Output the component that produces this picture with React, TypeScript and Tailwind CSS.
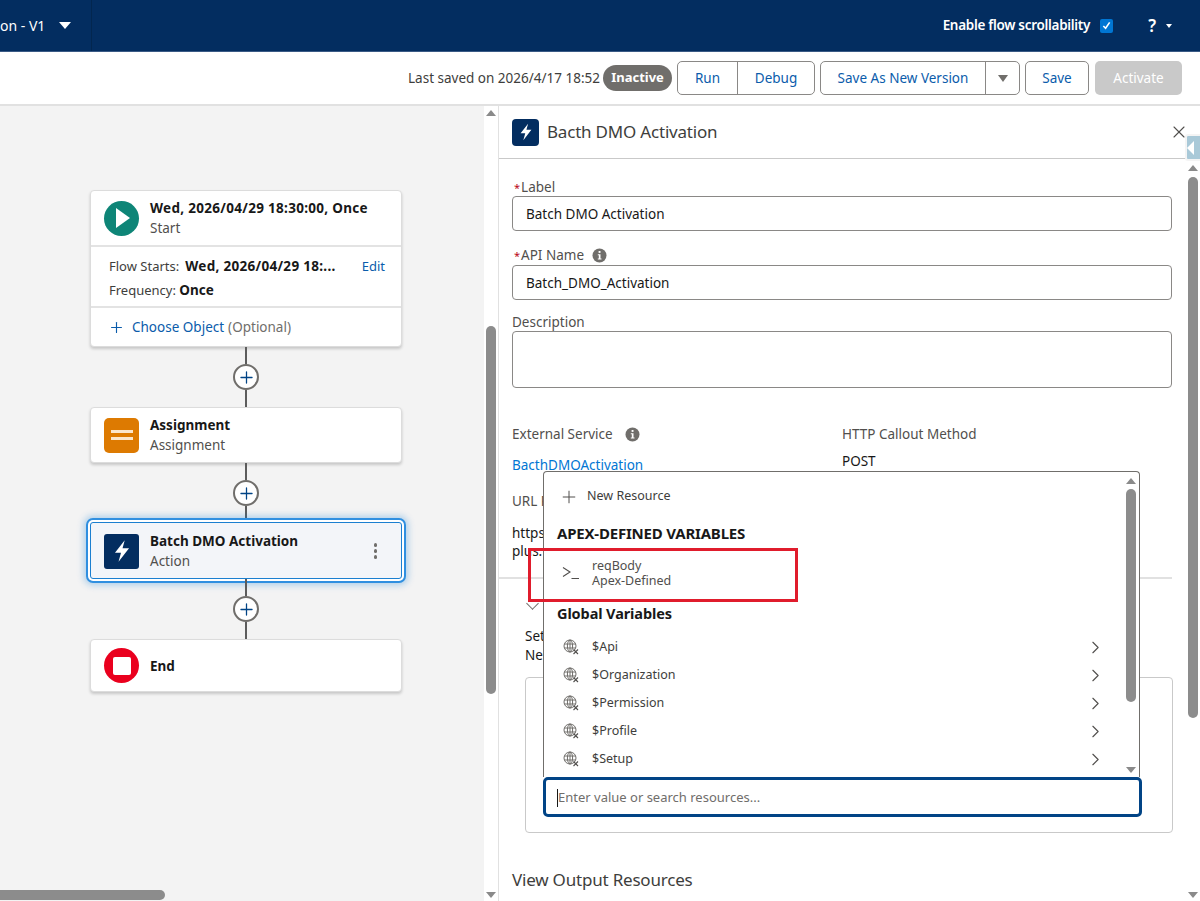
import { ChevronRight, Plus, X } from 'lucide-react';

const FONT = 'font-["Noto_Sans",sans-serif]';

function Bolt({ size }: { size: number }) {
    return (
        <svg width={size} height={size} viewBox="0 0 24 24" fill="white">
            <path d="M14.5 2 5.5 13.5h5.6L8.8 22l9.7-12.6h-6z" />
        </svg>
    );
}

function InfoDot({ className }: { className?: string }) {
    return (
        <svg width="15" height="15" viewBox="0 0 15 15" className={className}>
            <circle cx="7.5" cy="7.5" r="7" fill="#706e6b" />
            <rect x="6.6" y="3" width="1.9" height="1.9" fill="white" />
            <path d="M5.8 6.2h2.7v4.4h1v1H5.8v-1h1V7.2h-1z" fill="white" />
        </svg>
    );
}

function GlobeFx() {
    return (
        <svg width="16" height="16" viewBox="0 0 16 16" fill="none" stroke="#706e6b" strokeWidth="1">
            <circle cx="7" cy="7" r="6" />
            <ellipse cx="7" cy="7" rx="2.6" ry="6" />
            <path d="M1.2 5h11.6M1.2 9h11.6M7 1v12" />
            <path d="M10.5 10.5l4.5 4.5M15 10.5 10.5 15" stroke="#514f4d" strokeWidth="1.1" fill="white" />
        </svg>
    );
}

function PlusNode({ lower = 'h-[17px]' }: { lower?: string }) {
    return (
        <div className="flex flex-col items-center">
            <div className="w-[2px] h-[17px] bg-[#5c5c5c]" />
            <div className="w-[26px] h-[26px] rounded-full bg-white border-2 border-[#706e6b] flex items-center justify-center">
                <Plus size={19} strokeWidth={1.6} className="text-[#014486]" />
            </div>
            <div className={`w-[2px] ${lower} bg-[#5c5c5c]`} />
        </div>
    );
}

function NodeTitle({ title, sub, wide }: { title: string; sub?: string; wide?: boolean }) {
    return (
        <div className="ml-[11px] min-w-0">
            <div className={`text-[13.5px] leading-[20px] font-bold text-[#181818] whitespace-nowrap ${wide ? 'tracking-[0.3px]' : ''}`}>{title}</div>
            {sub && <div className="text-[13.5px] leading-[20px] text-[#514f4d]">{sub}</div>}
        </div>
    );
}

function ScrollArrow({ down }: { down?: boolean }) {
    return (
        <div
            className={`w-0 h-0 border-l-[5px] border-r-[5px] border-l-transparent border-r-transparent ${
                down ? 'border-t-[6px] border-t-[#8a8a8a]' : 'border-b-[6px] border-b-[#8a8a8a]'
            }`}
        />
    );
}

function ResourceRow({ name }: { name: string }) {
    return (
        <div className="h-[28px] flex items-center pl-[19px] pr-[18px]">
            <GlobeFx />
            <span className="ml-[13px] text-[12.5px] text-[#3e3e3c]">{name}</span>
            <ChevronRight size={21} strokeWidth={1.3} className="ml-auto text-[#514f4d]" />
        </div>
    );
}

function ToolButton({ label, className }: { label: string; className?: string }) {
    return (
        <div className={`h-full pt-[1px] flex items-center justify-center text-[13.5px] text-[#0b5cab] ${className ?? ''}`}>
            {label}
        </div>
    );
}

export default function App() {
    const resources = ['$Api', '$Organization', '$Permission', '$Profile', '$Setup'];

    return (
        <div className={`w-[1200px] h-[901px] overflow-hidden flex flex-col bg-white ${FONT}`}>
            {/* Top bar */}
            <div className="h-[52px] shrink-0 bg-[#032d60] border-b border-[#3a5a85] flex items-center text-white">
                <div className="w-[92px] h-full shrink-0 border-r border-[#02264f] flex items-center">
                    <span className="text-[14px]">on - V1</span>
                    <div className="ml-[14px] w-0 h-0 border-l-[6px] border-r-[6px] border-t-[7px] border-l-transparent border-r-transparent border-t-white" />
                </div>
                <div className="ml-auto flex items-center">
                    <span className="text-[13.5px] font-semibold tracking-[-0.3px]">Enable flow scrollability</span>
                    <div className="ml-[10px] w-[13px] h-[14px] rounded-[2px] bg-[#0176d3] flex items-center justify-center">
                        <svg width="9" height="9" viewBox="0 0 10 10" fill="none" stroke="white" strokeWidth="1.8">
                            <path d="M1.5 5.5 4 8l4.5-6.5" />
                        </svg>
                    </div>
                    <span className="ml-[35px] text-[17px] font-semibold">?</span>
                    <div className="ml-[10px] mr-[28px] w-0 h-0 border-l-[3px] border-r-[3px] border-t-[4px] border-l-transparent border-r-transparent border-t-white" />
                </div>
            </div>

            {/* Toolbar */}
            <div className="h-[54px] shrink-0 border-b-2 border-[#e1e1e1] flex items-center justify-end pr-[18px]">
                <span className="pt-[1px] text-[13.5px] text-[#3e3e3c] whitespace-nowrap">Last saved on 2026/4/17 18:52</span>
                <div className="ml-[3px] w-[69px] h-[26px] rounded-full bg-[#706e6b] text-white text-[13px] font-bold flex items-center justify-center">
                    Inactive
                </div>
                <div className="ml-[5px] w-[138px] h-[34px] flex rounded-[5px] border border-[#8a8886] bg-white">
                    <ToolButton label="Run" className="w-[60px] border-r border-[#8a8886]" />
                    <ToolButton label="Debug" className="flex-1" />
                </div>
                <div className="ml-[5px] w-[200px] h-[34px] flex rounded-[5px] border border-[#8a8886] bg-white">
                    <ToolButton label="Save As New Version" className="w-[165px] border-r border-[#8a8886]" />
                    <div className="flex-1 flex items-center justify-center">
                        <div className="w-0 h-0 border-l-[5px] border-r-[5px] border-t-[7px] border-l-transparent border-r-transparent border-t-[#706e6b]" />
                    </div>
                </div>
                <div className="ml-[5px] w-[64px] h-[34px] rounded-[5px] border border-[#8a8886] bg-white">
                    <ToolButton label="Save" />
                </div>
                <div className="ml-[6px] w-[87px] h-[34px] pt-[1px] rounded-[5px] bg-[#c9c9c9] text-white text-[13.5px] flex items-center justify-center">
                    Activate
                </div>
            </div>

            <div className="flex-1 min-h-0 flex">
                {/* Canvas */}
                <div className="w-[484px] shrink-0 bg-[#f3f3f3] flex flex-col">
                    <div className="flex-1 min-h-0 pl-[90px] pt-[84px]">
                        <div className="w-[312px] flex flex-col items-center">
                            <div className="w-full bg-white rounded-[4px] border border-[#dcdcdc] shadow-[0_2px_3px_rgba(0,0,0,0.18)]">
                                <div className="h-[56px] flex items-center pl-[13px] border-b-2 border-[#e3e3e3]">
                                    <div className="w-[35px] h-[35px] shrink-0 rounded-full bg-[#0e8577] flex items-center justify-center">
                                        <div className="ml-[3px] w-0 h-0 border-t-[10px] border-b-[10px] border-l-[14px] border-t-transparent border-b-transparent border-l-white" />
                                    </div>
                                    <NodeTitle title="Wed, 2026/04/29 18:30:00, Once" sub="Start" wide />
                                </div>
                                <div className="h-[61px] pl-[18px] pr-[16px] pt-[7px] border-b-2 border-[#e3e3e3] text-[13px] leading-[24px] text-[#3e3e3c]">
                                    <div className="flex whitespace-nowrap">
                                        <span>Flow Starts:</span>
                                        <span className="ml-[6px] text-[13.5px] tracking-[0.3px] font-bold text-[#181818]">Wed, 2026/04/29 18:...</span>
                                        <span className="ml-auto text-[#0b5cab]">Edit</span>
                                    </div>
                                    <div>
                                        Frequency: <span className="text-[13.5px] font-bold text-[#181818]">Once</span>
                                    </div>
                                </div>
                                <div className="h-[38px] flex items-center pl-[17px] text-[13.5px]">
                                    <Plus size={17} strokeWidth={1.6} className="text-[#0b5cab]" />
                                    <span className="ml-[7px] text-[#0b5cab]">Choose Object</span>
                                    <span className="ml-[4px] text-[#706e6b]">(Optional)</span>
                                </div>
                            </div>

                            <PlusNode />

                            <div className="w-full h-[56px] bg-white rounded-[4px] border border-[#dcdcdc] shadow-[0_2px_3px_rgba(0,0,0,0.18)] flex items-center pl-[13px]">
                                <div className="w-[35px] h-[35px] shrink-0 rounded-[5px] bg-[#dd7a01] flex flex-col items-center justify-center gap-[4px]">
                                    <div className="w-[22px] h-[3px] bg-[#fbe6cc]" />
                                    <div className="w-[22px] h-[3px] bg-[#fbe6cc]" />
                                </div>
                                <NodeTitle title="Assignment" sub="Assignment" />
                            </div>

                            <PlusNode lower="h-[16px]" />

                            <div className="w-full h-[57px] pt-[1px] bg-[#f3f5f9] rounded-[3px] border border-[#1b7fd0] shadow-[0_0_0_2px_white,0_0_0_4px_#2f8fe0,0_0_7px_6px_rgba(1,118,211,0.3)] flex items-center pl-[13px] pr-[24px]">
                                <div className="w-[35px] h-[35px] shrink-0 rounded-[3px] bg-[#032d60] flex items-center justify-center">
                                    <Bolt size={26} />
                                </div>
                                <NodeTitle title="Batch DMO Activation" sub="Action" />
                                <div className="ml-auto flex flex-col gap-[2.5px]">
                                    <div className="w-[3.5px] h-[3.5px] rounded-full bg-[#706e6b]" />
                                    <div className="w-[3.5px] h-[3.5px] rounded-full bg-[#706e6b]" />
                                    <div className="w-[3.5px] h-[3.5px] rounded-full bg-[#706e6b]" />
                                </div>
                            </div>

                            <PlusNode />

                            <div className="w-full h-[53px] bg-white rounded-[4px] border border-[#dcdcdc] shadow-[0_2px_3px_rgba(0,0,0,0.18)] flex items-center pl-[13px]">
                                <div className="w-[35px] h-[35px] shrink-0 rounded-full bg-[#ea001e] flex items-center justify-center">
                                    <div className="w-[18px] h-[18px] rounded-[2px] bg-white" />
                                </div>
                                <NodeTitle title="End" />
                            </div>
                        </div>
                    </div>
                    {/* Horizontal scrollbar */}
                    <div className="h-[10px] mb-[1px] shrink-0">
                        <div className="w-[165px] h-full rounded-r-full bg-[#8c8c8c]" />
                    </div>
                </div>

                {/* Canvas vertical scrollbar */}
                <div className="w-[14px] shrink-0 bg-white flex flex-col items-center pt-[4px] pb-[3px]">
                    <ScrollArrow />
                    <div className="mt-[210px] w-[10px] h-[368px] rounded-full bg-[#8c8c8c]" />
                    <div className="mt-auto">
                        <ScrollArrow down />
                    </div>
                </div>

                {/* Right panel */}
                <div className="relative flex-1 min-w-0 border-l border-[#e1e1e1] flex flex-col">
                    <div className="h-[53px] shrink-0 border-b border-[#c9c9c9] flex items-center pl-[13px] mr-[14px]">
                        <div className="w-[27px] h-[27px] rounded-[4px] bg-[#032d60] flex items-center justify-center">
                            <Bolt size={20} />
                        </div>
                        <span className="ml-[8px] text-[17px] text-[#3e3e3c] tracking-[-0.2px]">Bacth DMO Activation</span>
                        <X size={20} strokeWidth={1.3} className="ml-auto mr-[-3px] text-[#514f4d]" />
                    </div>

                    {/* Collapse handle */}
                    <div className="absolute right-0 top-[28px] w-[15px] h-[27px] rounded-l-[3px] border-2 border-r-0 border-[#f4f4f4] bg-[#a9c9d8] flex items-center justify-start">
                        <div className="w-0 h-0 border-t-[7px] border-b-[7px] border-r-[7px] border-t-transparent border-b-transparent border-r-white" />
                    </div>

                    <div className="flex-1 min-h-0 flex">
                        <div className="relative flex-1 min-w-0 pl-[13px] pr-[14px] text-[13.5px] text-[#514f4d]">
                            <div className="mt-[19px] h-[18px] leading-[18px] pl-[2px]">
                                <span className="text-[#ba0517] text-[11px] mr-[1px]">*</span>Label
                            </div>
                            <div className="h-[35px] pt-[1px] rounded-[4px] border border-[#8a8886] flex items-center px-[13px] text-[#181818]">
                                Batch DMO Activation
                            </div>
                            <div className="mt-[15px] h-[18px] leading-[18px] pl-[2px] flex items-center">
                                <span><span className="text-[#ba0517] text-[11px] mr-[1px]">*</span>API Name</span>
                                <InfoDot className="ml-[8px]" />
                            </div>
                            <div className="mt-[1px] h-[35px] pt-[1px] rounded-[4px] border border-[#8a8886] flex items-center px-[13px] text-[#181818]">
                                Batch_DMO_Activation
                            </div>
                            <div className="mt-[13px] leading-[18px]">Description</div>
                            <div className="h-[57px] rounded-[4px] border border-[#8a8886]" />

                            <div className="mt-[37px] flex leading-[18px]">
                                <div className="w-[330px] flex items-center">
                                    External Service
                                    <InfoDot className="ml-[12px]" />
                                </div>
                                <div>HTTP Callout Method</div>
                            </div>
                            <div className="mt-[12px] flex leading-[20px]">
                                <div className="w-[330px] text-[#0176d3]">BacthDMOActivation</div>
                                <div className="text-[#181818] -mt-[4px]">POST</div>
                            </div>
                            <div className="mt-[16px] leading-[20px]">URL Path</div>
                            <div className="mt-[13px] leading-[18px] text-[#181818]">
                                https
                                <br />
                                plus.
                            </div>
                            <div className="mt-[17px] h-[2px] -ml-[13px] bg-[#e1e1e1]" />
                            <div className="mt-[20px] ml-[16px] w-[9px] h-[9px] border-r border-b border-[#706e6b] rotate-45" />
                            <div className="mt-[19px] ml-[13px] leading-[19px] text-[#181818]">
                                Set
                                <br />
                                Ne
                            </div>
                            <div className="mt-[12px] ml-[13px] mr-[-1px] h-[156px] rounded-[4px] border border-[#c9c9c9]" />
                            <div className="mt-[36px] text-[17px] leading-[22px] text-[#3e3e3c] tracking-[-0.2px]">View Output Resources</div>

                            {/* Resource picker, open over the form */}
                            <div className="absolute left-[44px] top-[312px] w-[597px] h-[306px] bg-white rounded-t-[4px] border border-[#706e6b] border-b-0 flex">
                                <div className="flex-1 min-w-0">
                                    <div className="h-[49px] flex items-center pl-[15px]">
                                        <Plus size={20} strokeWidth={1.2} className="text-[#514f4d]" />
                                        <span className="ml-[8px] text-[12.5px] text-[#3e3e3c]">New Resource</span>
                                    </div>
                                    <div className="pl-[13px] h-[26px] text-[15px] leading-[24px] font-bold text-[#181818] tracking-[-0.2px] whitespace-nowrap">APEX-DEFINED VARIABLES</div>
                                    <div className="mt-[3px] h-[45px] flex items-center pl-[18px]">
                                        <svg width="18" height="14" viewBox="0 0 18 14" fill="none" stroke="#514f4d" strokeWidth="1.1">
                                            <path d="M1 1.5 8 6 1 10.5M9.5 12.5H17" />
                                        </svg>
                                        <div className="ml-[12px] text-[12.5px] leading-[15px] text-[#514f4d]">
                                            <div>reqBody</div>
                                            <div>Apex-Defined</div>
                                        </div>
                                    </div>
                                    <div className="mt-[6px] pl-[13px] h-[26px] text-[14.5px] leading-[24px] font-bold text-[#181818] tracking-[-0.1px]">Global Variables</div>
                                    <div className="mt-[6px]">
                                        {resources.map((name) => (
                                            <ResourceRow key={name} name={name} />
                                        ))}
                                    </div>
                                </div>
                                <div className="w-[15px] shrink-0 flex flex-col items-center pr-[1px] pt-[6px] pb-[4px]">
                                    <ScrollArrow />
                                    <div className="mt-[5px] w-[10px] h-[213px] rounded-full bg-[#8c8c8c]" />
                                    <div className="mt-auto">
                                        <ScrollArrow down />
                                    </div>
                                </div>
                            </div>

                            {/* Search input under the picker */}
                            <div className="absolute left-[44px] top-[618px] w-[599px] h-[40px] pt-[1px] bg-white rounded-[5px] border-[3px] border-[#014486] flex items-center pl-[11px]">
                                <div className="w-[1px] h-[18px] bg-[#181818]" />
                                <span className="text-[13px] text-[#706e6b]">Enter value or search resources...</span>
                            </div>

                            {/* Red annotation box from the screenshot */}
                            <div className="absolute left-[29px] top-[389px] w-[270px] h-[54px] border-[3px] border-[#e01c2c]" />
                        </div>

                        {/* Panel scrollbar */}
                        <div className="w-[14px] shrink-0 flex flex-col items-center pt-[6px] pb-[3px]">
                            <ScrollArrow />
                            <div className="mt-[6px] w-[10px] h-[541px] rounded-full bg-[#8c8c8c]" />
                            <div className="mt-auto">
                                <ScrollArrow down />
                            </div>
                        </div>
                    </div>
                </div>
            </div>
        </div>
    );
}
